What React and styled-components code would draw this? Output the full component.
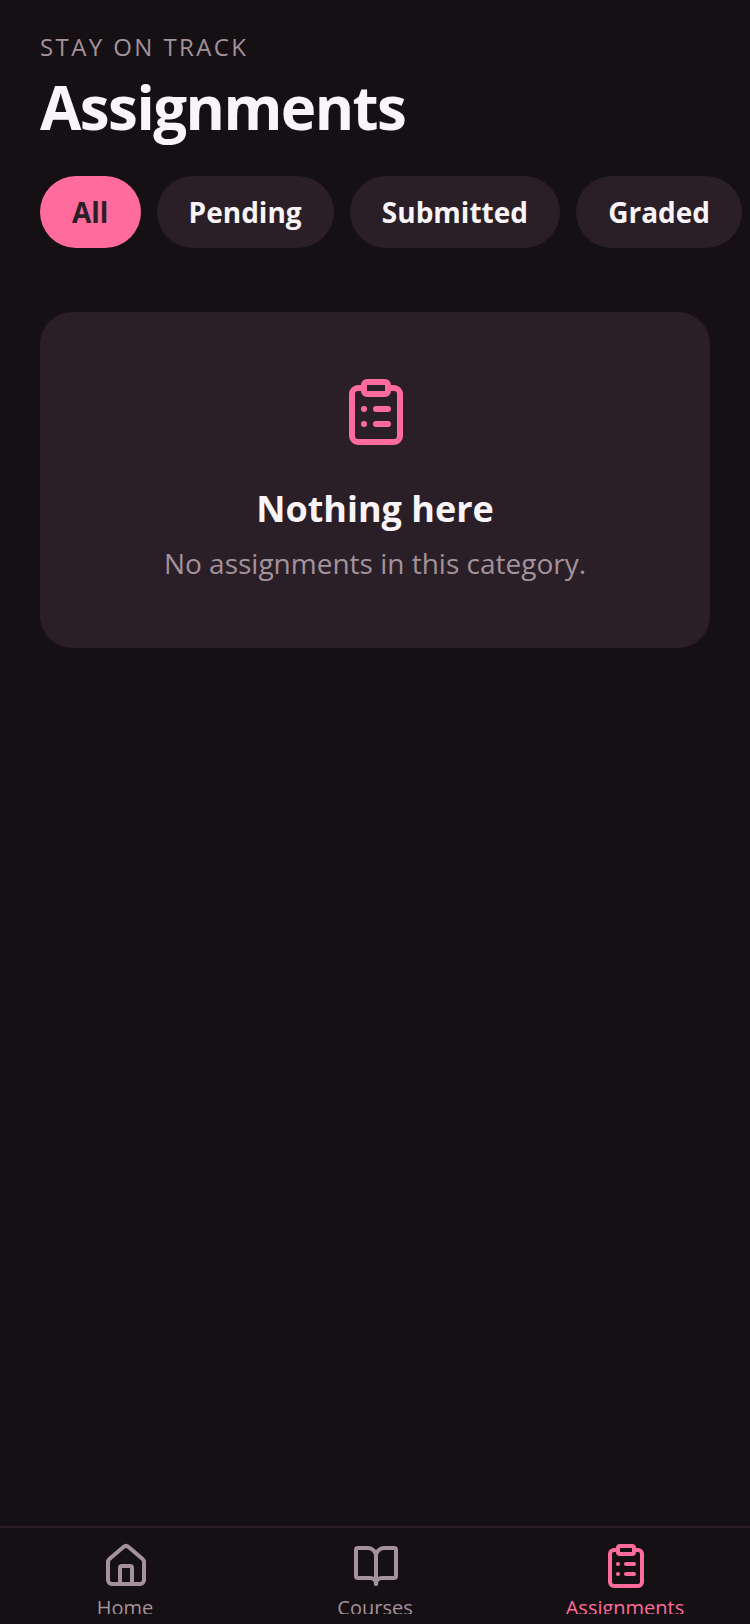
import React from "react"
import styled, { createGlobalStyle } from "styled-components"
import { House, BookOpen, ClipboardList } from "lucide-react"

const GlobalStyle = createGlobalStyle`
    html, body {
        margin: 0;
        padding: 0;
        background: #151013;
    }
    * {
        box-sizing: border-box;
    }
`
const Screen = styled.div`
    width: 750px;
    height: 1624px;
    display: flex;
    flex-direction: column;
    overflow: hidden;
    background: #151013;
    font-family: "Open Sans", sans-serif;
`
const Main = styled.main`
    flex: 1;
    padding: 31px 40px 0;
`
const Eyebrow = styled.div`
    font-size: 24px;
    line-height: 32px;
    letter-spacing: 2.4px;
    color: #a3929c;
`
const Title = styled.h1`
    margin: 8px 0 0;
    font-size: 60px;
    line-height: 72px;
    font-weight: 700;
    letter-spacing: -1.55px;
    color: #f9f4f7;
`
const Filters = styled.div`
    display: flex;
    gap: 16px;
    margin-top: 33px;
    width: 710px;
`
const Chip = styled.div`
    flex: none;
    height: 72px;
    padding: 0 32.2px 0 32px;
    display: flex;
    align-items: center;
    border-radius: 36px;
    font-size: 28px;
    font-weight: 700;
    background: ${p => (p.$active ? "#ff6b9d" : "#2a1f26")};
    color: ${p => (p.$active ? "#2a1f26" : "#f9f4f7")};
`
const EmptyCard = styled.section`
    margin-top: 64px;
    width: 670px;
    height: 336px;
    padding-top: 64px;
    display: flex;
    flex-direction: column;
    align-items: center;
    border-radius: 32px;
    background: #2a1f26;
    color: #ff6b9d;
    svg {
        margin-left: 2px;
    }
`
const EmptyTitle = styled.div`
    margin-top: 37px;
    font-size: 36px;
    line-height: 48px;
    font-weight: 700;
    color: #f9f4f7;
`
const EmptyText = styled.div`
    margin-top: 10px;
    font-size: 28px;
    line-height: 40px;
    color: #a3929c;
`
const TabBar = styled.nav`
    flex: none;
    height: 98px;
    display: flex;
    align-items: flex-start;
    border-top: 2px solid #2a1f26;
`
const Tab = styled.div`
    flex: 1;
    height: 86px;
    padding-top: 14px;
    display: flex;
    flex-direction: column;
    align-items: center;
    overflow: hidden;
    color: ${p => (p.$active ? "#ff6b9d" : "#a3929c")};
    svg {
        flex: none;
        margin-left: 2px;
    }
`
const TabLabel = styled.span`
    flex: none;
    margin-top: 4px;
    font-size: 20px;
    line-height: 28px;
    font-weight: 500;
`

const filters = ["All", "Pending", "Submitted", "Graded"]
const tabs = [
    { label: "Home", Icon: House },
    { label: "Courses", Icon: BookOpen },
    { label: "Assignments", Icon: ClipboardList, active: true },
]

export default function App() {
    return (
        <Screen>
            <GlobalStyle />
            <Main>
                <Eyebrow>STAY ON TRACK</Eyebrow>
                <Title>Assignments</Title>
                <Filters>
                    {filters.map((f, i) => (
                        <Chip key={f} $active={i === 0}>{f}</Chip>
                    ))}
                </Filters>
                <EmptyCard>
                    <ClipboardList size={72} strokeWidth={2} />
                    <EmptyTitle>Nothing here</EmptyTitle>
                    <EmptyText>No assignments in this category.</EmptyText>
                </EmptyCard>
            </Main>
            <TabBar>
                {tabs.map(({ label, Icon, active }) => (
                    <Tab key={label} $active={active}>
                        <Icon size={48} strokeWidth={2} />
                        <TabLabel>{label}</TabLabel>
                    </Tab>
                ))}
            </TabBar>
        </Screen>
    )
}
